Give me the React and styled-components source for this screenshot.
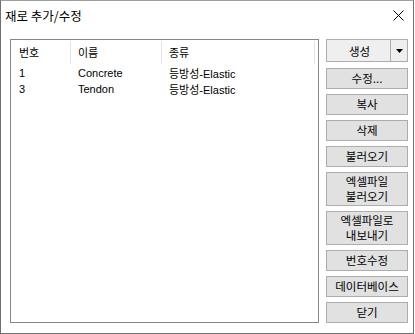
import styled, { createGlobalStyle } from "styled-components";

const GlobalStyle = createGlobalStyle`
    html, body {
        margin: 0;
        padding: 0;
        background: #ffffff;
    }
    body {
        font-family: "Liberation Sans", "Noto Sans CJK KR", sans-serif;
        color: #000;
    }
`;

const materials = [
    { id: 1, name: "Concrete", type: "등방성-Elastic" },
    { id: 3, name: "Tendon", type: "등방성-Elastic" },
];

const buttons = [
    { label: "수정..." },
    { label: "복사" },
    { label: "삭제" },
    { label: "불러오기" },
    { label: ["엑셀파일", "불러오기"], tall: true },
    { label: ["엑셀파일로", "내보내기"], tall: true },
    { label: "번호수정" },
    { label: "데이터베이스" },
    { label: "닫기" },
];

const App = () => {
    return (
        <>
            <GlobalStyle />
            <StWindow>
                <StTitleBar>
                    <StTitle>재로 추가/수정</StTitle>
                    <StClose>
                        <svg width="11" height="11" viewBox="0 0 11 11">
                            <path d="M0.5 0.5 L10.5 10.5 M10.5 0.5 L0.5 10.5" stroke="#000" strokeWidth="1" />
                        </svg>
                    </StClose>
                </StTitleBar>

                <StBody>
                    <StList>
                        <StHeader>
                            <StHeadCell $w={60}>번호</StHeadCell>
                            <StHeadCell $w={91}>이름</StHeadCell>
                            <StHeadCell $w={153}>종류</StHeadCell>
                        </StHeader>
                        {materials.map((item) => (
                            <StRow key={item.id}>
                                <StCell $w={60}>{item.id}</StCell>
                                <StCell $w={91}>{item.name}</StCell>
                                <StCell $w={153}>{item.type}</StCell>
                            </StRow>
                        ))}
                    </StList>

                    <StSide>
                        <StSplit>
                            <StSplitMain>생성</StSplitMain>
                            <StSplitArrow>
                                <svg width="7" height="4" viewBox="0 0 7 4">
                                    <path d="M0 0 L7 0 L3.5 4 Z" fill="#000" />
                                </svg>
                            </StSplitArrow>
                        </StSplit>
                        <StButtons>
                            {buttons.map((b, i) => (
                                <StButton key={i} $tall={b.tall}>
                                    {Array.isArray(b.label)
                                        ? b.label.map((line) => <span key={line}>{line}</span>)
                                        : b.label}
                                </StButton>
                            ))}
                        </StButtons>
                    </StSide>
                </StBody>
            </StWindow>
        </>
    );
};

export default App;

const StWindow = styled.div`
    width: 414px;
    height: 334px;
    box-sizing: border-box;
    border: 1px solid #6f6f6f;
    border-top-color: #a0a0a0;
    background: #ffffff;
    display: flex;
    flex-direction: column;
`;

const StTitleBar = styled.div`
    height: 29px;
    display: flex;
    align-items: center;
    justify-content: space-between;
    padding: 0 9px 2px 4px;
    flex-shrink: 0;
`;

const StTitle = styled.div`
    font-family: "Noto Sans CJK KR", sans-serif;
    font-size: 12.5px;
    color: #000;
`;

const StClose = styled.div`
    width: 11px;
    height: 11px;
    display: flex;
`;

const StBody = styled.div`
    display: flex;
    padding: 7px 0 0 9px;
    gap: 7px;
`;

const StList = styled.div`
    width: 309px;
    height: 284px;
    box-sizing: border-box;
    border: 1px solid #828790;
    background: #fff;
    font-family: "Liberation Sans", "Noto Sans CJK KR", sans-serif;
    font-size: 11px;
`;

const StHeader = styled.div`
    display: flex;
    height: 24px;
    margin-bottom: 1px;
`;

const StHeadCell = styled.div`
    width: ${(p) => p.$w}px;
    box-sizing: border-box;
    padding: 0 0 1px 7px;
    display: flex;
    align-items: center;
    border-right: 1px solid #e5e5e5;
    margin-top: 1px;
    &:first-child {
        padding-left: 8px;
    }
`;

const StRow = styled.div`
    display: flex;
    height: 16px;
    align-items: center;
`;

const StCell = styled.div`
    width: ${(p) => p.$w}px;
    box-sizing: border-box;
    padding-left: 7px;
    &:first-child {
        padding-left: 8px;
    }
`;

const StSide = styled.div`
    width: 82px;
    display: flex;
    flex-direction: column;
    gap: 6px;
`;

const StSplit = styled.div`
    height: 23px;
    box-sizing: border-box;
    border: 1px solid #adadad;
    background: #efefef;
    display: flex;
    font-family: "Noto Sans CJK KR", sans-serif;
    font-size: 11.5px;
`;

const StSplitMain = styled.div`
    flex: 1;
    display: flex;
    align-items: center;
    justify-content: center;
    border-right: 1px solid #adadad;
    padding-left: 2px;
`;

const StSplitArrow = styled.div`
    width: 16px;
    display: flex;
    align-items: center;
    justify-content: center;
    padding-top: 1px;
`;

const StButtons = styled.div`
    display: flex;
    flex-direction: column;
    gap: 5px;
`;

const StButton = styled.div`
    height: ${(p) => (p.$tall ? 34 : 21)}px;
    box-sizing: border-box;
    border: 1px solid #adadad;
    background: #e1e1e1;
    display: flex;
    flex-direction: column;
    align-items: center;
    justify-content: center;
    font-family: "Noto Sans CJK KR", sans-serif;
    font-size: 11.5px;
    line-height: 15px;
    color: #000;
`;
